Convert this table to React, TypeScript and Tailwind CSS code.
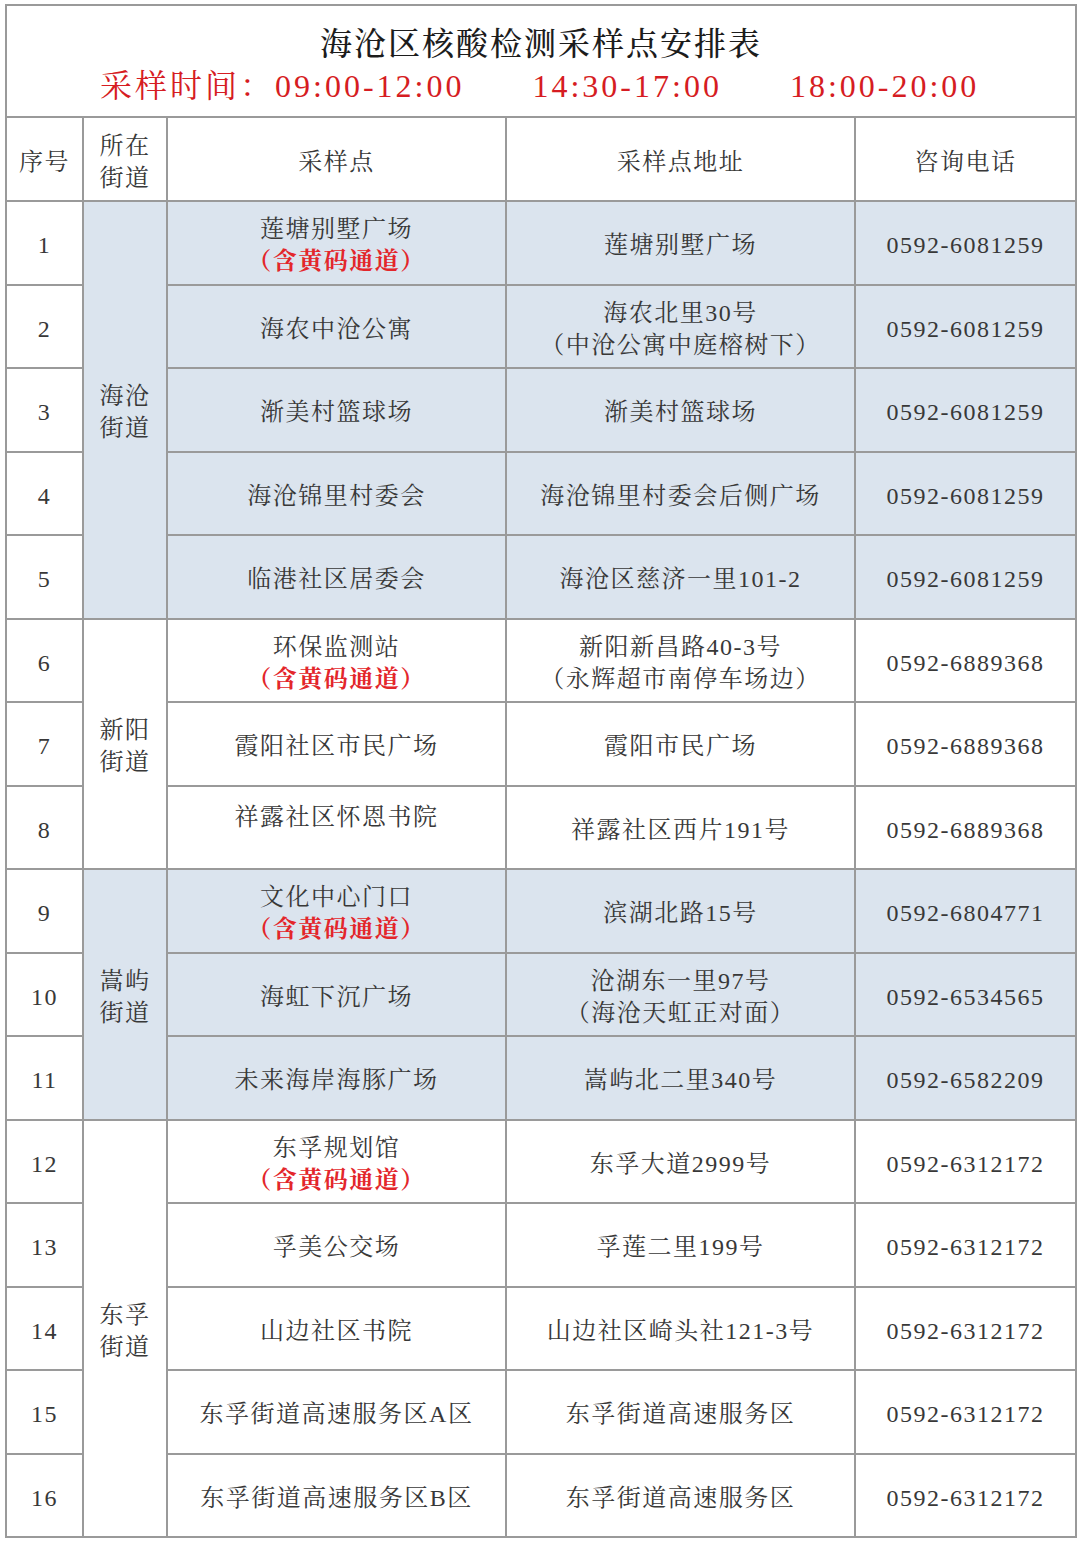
import React from 'react'

type Row = {
	no: number
	site: string
	yellow?: boolean
	top?: boolean
	addr: string[]
	phone: string
	street?: { name: string[]; span: string }
	blue: boolean
}

const rows: Row[] = [
	{ no: 1, site: '莲塘别墅广场', yellow: true, addr: ['莲塘别墅广场'], phone: '0592-6081259', street: { name: ['海沧', '街道'], span: 'row-span-5' }, blue: true },
	{ no: 2, site: '海农中沧公寓', addr: ['海农北里30号', '（中沧公寓中庭榕树下）'], phone: '0592-6081259', blue: true },
	{ no: 3, site: '渐美村篮球场', addr: ['渐美村篮球场'], phone: '0592-6081259', blue: true },
	{ no: 4, site: '海沧锦里村委会', addr: ['海沧锦里村委会后侧广场'], phone: '0592-6081259', blue: true },
	{ no: 5, site: '临港社区居委会', addr: ['海沧区慈济一里101-2'], phone: '0592-6081259', blue: true },
	{ no: 6, site: '环保监测站', yellow: true, addr: ['新阳新昌路40-3号', '（永辉超市南停车场边）'], phone: '0592-6889368', street: { name: ['新阳', '街道'], span: 'row-span-3' }, blue: false },
	{ no: 7, site: '霞阳社区市民广场', addr: ['霞阳市民广场'], phone: '0592-6889368', blue: false },
	{ no: 8, site: '祥露社区怀恩书院', top: true, addr: ['祥露社区西片191号'], phone: '0592-6889368', blue: false },
	{ no: 9, site: '文化中心门口', yellow: true, addr: ['滨湖北路15号'], phone: '0592-6804771', street: { name: ['嵩屿', '街道'], span: 'row-span-3' }, blue: true },
	{ no: 10, site: '海虹下沉广场', addr: ['沧湖东一里97号', '（海沧天虹正对面）'], phone: '0592-6534565', blue: true },
	{ no: 11, site: '未来海岸海豚广场', addr: ['嵩屿北二里340号'], phone: '0592-6582209', blue: true },
	{ no: 12, site: '东孚规划馆', yellow: true, addr: ['东孚大道2999号'], phone: '0592-6312172', street: { name: ['东孚', '街道'], span: 'row-span-5' }, blue: false },
	{ no: 13, site: '孚美公交场', addr: ['孚莲二里199号'], phone: '0592-6312172', blue: false },
	{ no: 14, site: '山边社区书院', addr: ['山边社区崎头社121-3号'], phone: '0592-6312172', blue: false },
	{ no: 15, site: '东孚街道高速服务区A区', addr: ['东孚街道高速服务区'], phone: '0592-6312172', blue: false },
	{ no: 16, site: '东孚街道高速服务区B区', addr: ['东孚街道高速服务区'], phone: '0592-6312172', blue: false },
]

const cell = 'flex flex-col items-center justify-center border-r-2 border-b-2 border-[#9a9a9a] pt-[5px] text-center leading-[32px]'

export default function App() {
	return (
		<div
			className="min-h-screen bg-white pt-[4px] pl-[5px] text-[24px] tracking-[1.5px] text-[#383838]"
			style={{ fontFamily: '"Liberation Serif", "Noto Serif CJK SC", "Noto Sans CJK SC", serif' }}
		>
			<div className="w-[1072px]">
				<div className="flex h-[114px] flex-col items-center border-2 border-[#9a9a9a] pt-[16px]">
					<div className="text-[32px] leading-[44px] font-medium tracking-[2px] text-[#1c1c1c]">海沧区核酸检测采样点安排表</div>
					<div className="flex w-full pl-[93px] text-[32px] leading-[40px] tracking-[3px] text-[#d61c22]">
						<span>采样时间：09:00-12:00</span>
						<span className="ml-[68px]">14:30-17:00</span>
						<span className="ml-[68px]">18:00-20:00</span>
					</div>
				</div>
				<div className="grid grid-cols-[77px_84px_339px_349px_221px] grid-rows-[84px_repeat(16,83.5px)] border-l-2 border-[#9a9a9a]">
					<div className={cell}>序号</div>
					<div className={cell}>
						<span>所在</span>
						<span>街道</span>
					</div>
					<div className={cell}>采样点</div>
					<div className={cell}>采样点地址</div>
					<div className={cell}>咨询电话</div>
					{rows.map((r) => {
						const bg = r.blue ? 'bg-[#dbe4ee]' : 'bg-white'
						return (
							<React.Fragment key={r.no}>
								<div className={`${cell} bg-white`}>{r.no}</div>
								{r.street && (
									<div className={`${cell} ${r.street.span} ${bg}`}>
										{r.street.name.map((n) => (
											<span key={n}>{n}</span>
										))}
									</div>
								)}
								<div className={`${cell} ${bg} ${r.top ? '!justify-start !pt-[14px]' : ''}`}>
									<span>{r.site}</span>
									{r.yellow && <span className="font-bold tracking-[1.5px] text-[#e3262b]">（含黄码通道）</span>}
								</div>
								<div className={`${cell} ${bg}`}>
									{r.addr.map((a) => (
										<span key={a}>{a}</span>
									))}
								</div>
								<div className={`${cell} ${bg} font-light tracking-[1.5px]`}>{r.phone}</div>
							</React.Fragment>
						)
					})}
				</div>
			</div>
		</div>
	)
}
